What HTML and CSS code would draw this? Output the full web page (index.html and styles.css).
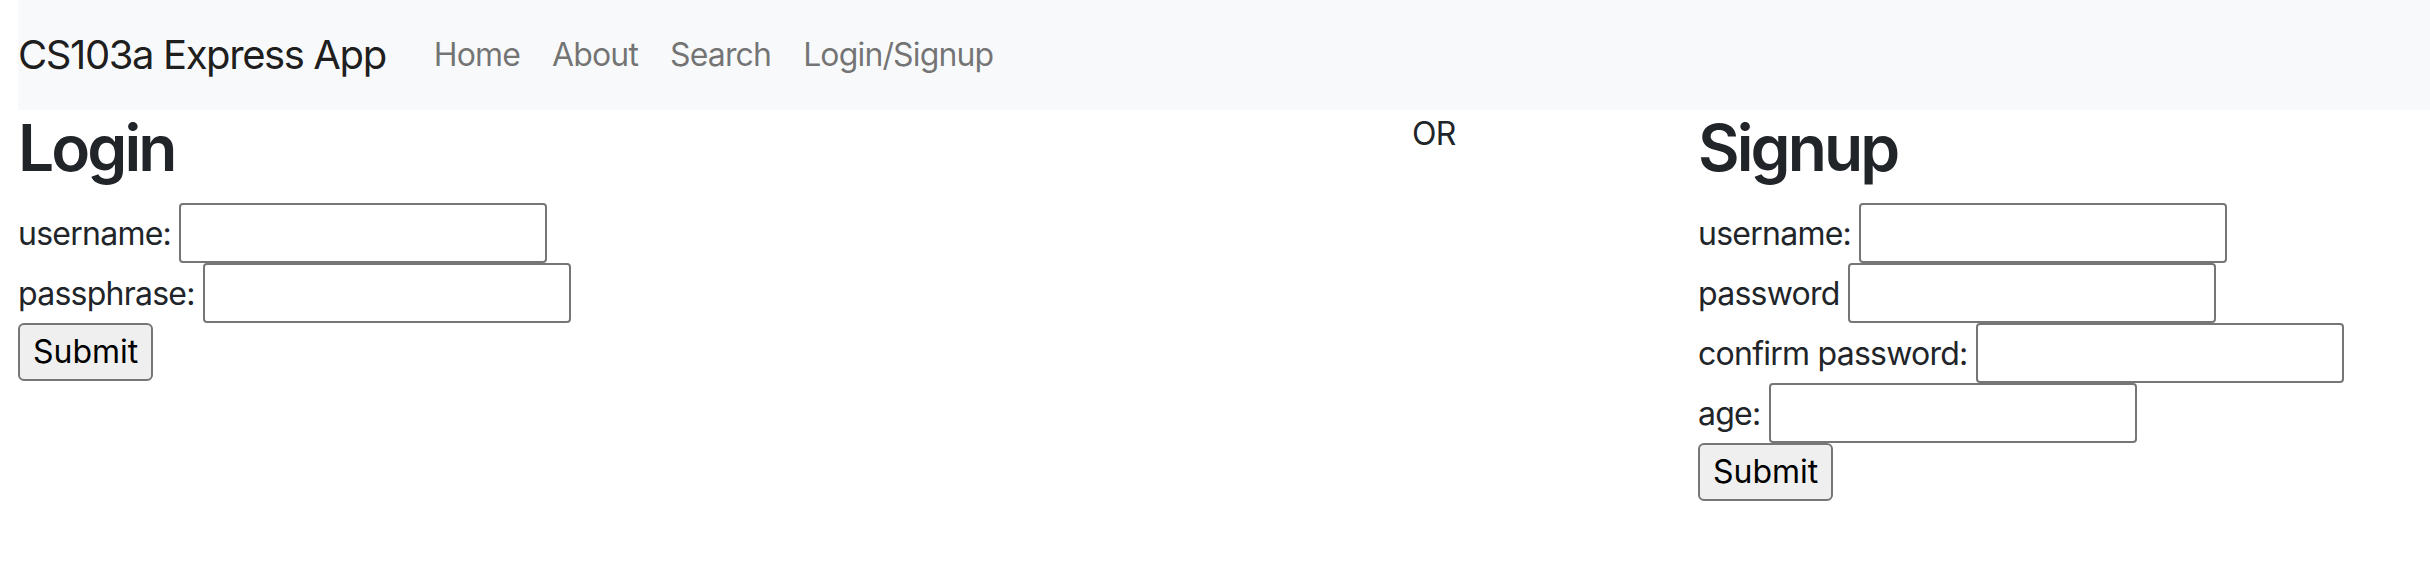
FILE: index.html
```html
<!DOCTYPE html>
<html lang="en">
<head>
<meta charset="utf-8">
<title>CS103a Express App</title>
<link rel="stylesheet" href="styles.css">
</head>
<body>
<nav class="navbar">
  <a class="brand" href="#">CS103a Express App</a>
  <ul class="nav">
    <li><a class="nav-link" href="#">Home</a></li>
    <li><a class="nav-link" href="#">About</a></li>
    <li><a class="nav-link" href="#">Search</a></li>
    <li><a class="nav-link" href="#">Login/Signup</a></li>
  </ul>
</nav>
<main class="auth">
  <section class="col">
    <h2 class="title">Login</h2>
    <form class="form">
      <div class="field">username: <input type="text" class="input"></div>
      <div class="field">passphrase: <input type="password" class="input"></div>
      <div class="field"><button type="submit" class="btn">Submit</button></div>
    </form>
  </section>
  <div class="or">OR</div>
  <section class="col">
    <h2 class="title">Signup</h2>
    <form class="form">
      <div class="field">username: <input type="text" class="input"></div>
      <div class="field">password <input type="password" class="input"></div>
      <div class="field">confirm password: <input type="password" class="input"></div>
      <div class="field">age: <input type="text" class="input"></div>
      <div class="field"><button type="submit" class="btn">Submit</button></div>
    </form>
  </section>
</main>
</body>
</html>
```
FILE: styles.css
```css
* { box-sizing: border-box; }
html, body { margin: 0; padding: 0; background: #fff; }
body {
  font-family: Inter, "Liberation Sans", Arial, sans-serif;
  font-size: 32px;
  line-height: 48px;
  color: #212529;
}
.navbar {
  margin-left: 18px;
  height: 110px;
  background: #f8f9fa;
  display: flex;
  align-items: center;
}
.brand {
  font-size: 40px;
  line-height: 60px;
  color: rgba(0, 0, 0, 0.9);
  text-decoration: none;
  margin-right: 32px;
  letter-spacing: -1.4px;
}
.nav {
  list-style: none;
  margin: 0;
  padding: 0;
  display: flex;
}
.nav-link {
  display: block;
  padding: 0 16px;
  color: rgba(0, 0, 0, 0.55);
  text-decoration: none;
  letter-spacing: -0.85px;
}
.auth {
  display: grid;
  grid-template-columns: 1394px 286px 1fr;
  padding-left: 18px;
}
.title {
  font-size: 64px;
  font-weight: 600;
  line-height: 1.2;
  margin: 0 0 16px;
  letter-spacing: -2.9px;
}
.or { letter-spacing: -0.6px; }
.form { margin: 0; }
.field { white-space: nowrap; letter-spacing: -0.75px; }
.input {
  font: inherit;
  width: 368px;
  height: 60px;
  padding: 2px 4px;
  border: 2px solid #767676;
  border-radius: 4px;
  background: #fff;
  vertical-align: baseline;
  margin: 0;
}
.btn {
  font: inherit;
  color: #000;
  height: 58px;
  padding: 0 13px;
  border: 2px solid #767676;
  border-radius: 6px;
  background: #efefef;
  margin: 0;
}
```
